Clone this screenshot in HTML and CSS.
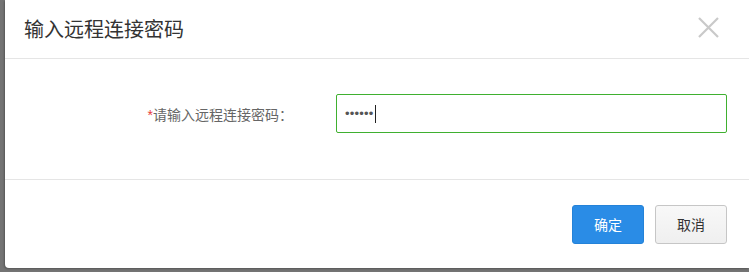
FILE: index.html
```html
<!DOCTYPE html>
<html lang="zh">
<head>
<meta charset="utf-8">
<link rel="stylesheet" href="styles.css">
</head>
<body>
<div class="dialog">
  <div class="dialog-header">
    <div class="dialog-title">输入远程连接密码</div>
    <button class="close" aria-label="关闭">
      <svg width="21" height="21" viewBox="0 0 21 21"><path d="M1 1 L20 20 M20 1 L1 20" stroke="#c9c9c9" stroke-width="2.2" fill="none"/></svg>
    </button>
  </div>
  <div class="dialog-body">
    <div class="form-row">
      <label class="form-label"><span class="req">*</span>请输入远程连接密码：</label>
      <div class="input-box"><span class="dots">••••••</span><span class="caret"></span></div>
    </div>
  </div>
  <div class="dialog-footer">
    <button class="btn btn-primary">确定</button>
    <button class="btn btn-default">取消</button>
  </div>
</div>
</body>
</html>
```
FILE: styles.css
```css
html, body {
  margin: 0;
  padding: 0;
  height: 100%;
  overflow: hidden;
}
body {
  background: #747474;
  font-family: "Liberation Sans", "Noto Sans CJK SC", sans-serif;
}
.dialog {
  margin-left: 5px;
  width: 744px;
  height: 268px;
  background: #fff;
  border-radius: 0 0 0 4px;
  box-shadow: -1px 1px 2px rgba(0,0,0,0.25);
  display: flex;
  flex-direction: column;
}
.dialog-header {
  height: 58px;
  border-bottom: 1px solid #e5e5e5;
  display: flex;
  align-items: center;
  justify-content: space-between;
  padding: 0 30px 0 19px;
}
.dialog-title {
  font-size: 20px;
  color: #333;
  margin-top: -2px;
}
.close {
  border: 0;
  background: none;
  padding: 0;
  width: 21px;
  height: 21px;
  margin-top: -4px;
  cursor: pointer;
}
.close svg { display: block; }
.dialog-body {
  height: 121px;
  border-bottom: 1px solid #e5e5e5;
  padding-top: 35px;
  box-sizing: border-box;
}
.form-row {
  display: flex;
  align-items: center;
}
.form-label {
  width: 331px;
  text-align: right;
  font-size: 14px;
  color: #666;
  padding-right: 43px;
  box-sizing: border-box;
}
.req {
  color: #e83a3a;
}
.input-box {
  width: 391px;
  height: 39px;
  box-sizing: border-box;
  border: 1px solid #3fb030;
  border-radius: 2px;
  display: flex;
  align-items: center;
  padding-left: 8px;
}
.dots {
  font-size: 13px;
  color: #555;
  letter-spacing: 0.2px;
}
.caret {
  width: 1px;
  height: 18px;
  background: #222;
  margin-left: 1px;
}
.dialog-footer {
  flex: 1;
  display: flex;
  justify-content: flex-end;
  align-items: center;
  gap: 11px;
  padding-right: 22px;
}
.btn {
  font-family: "Liberation Sans", "Noto Sans CJK SC", sans-serif;
  font-size: 14px;
  height: 39px;
  border-radius: 3px;
  cursor: pointer;
}
.btn-primary {
  width: 72px;
  background: #2a8ce6;
  border: 1px solid #2482d8;
  color: #fff;
}
.btn-default {
  width: 72px;
  background: linear-gradient(#f8f8f8, #efefef);
  border: 1px solid #c6c6c6;
  color: #333;
}
```
